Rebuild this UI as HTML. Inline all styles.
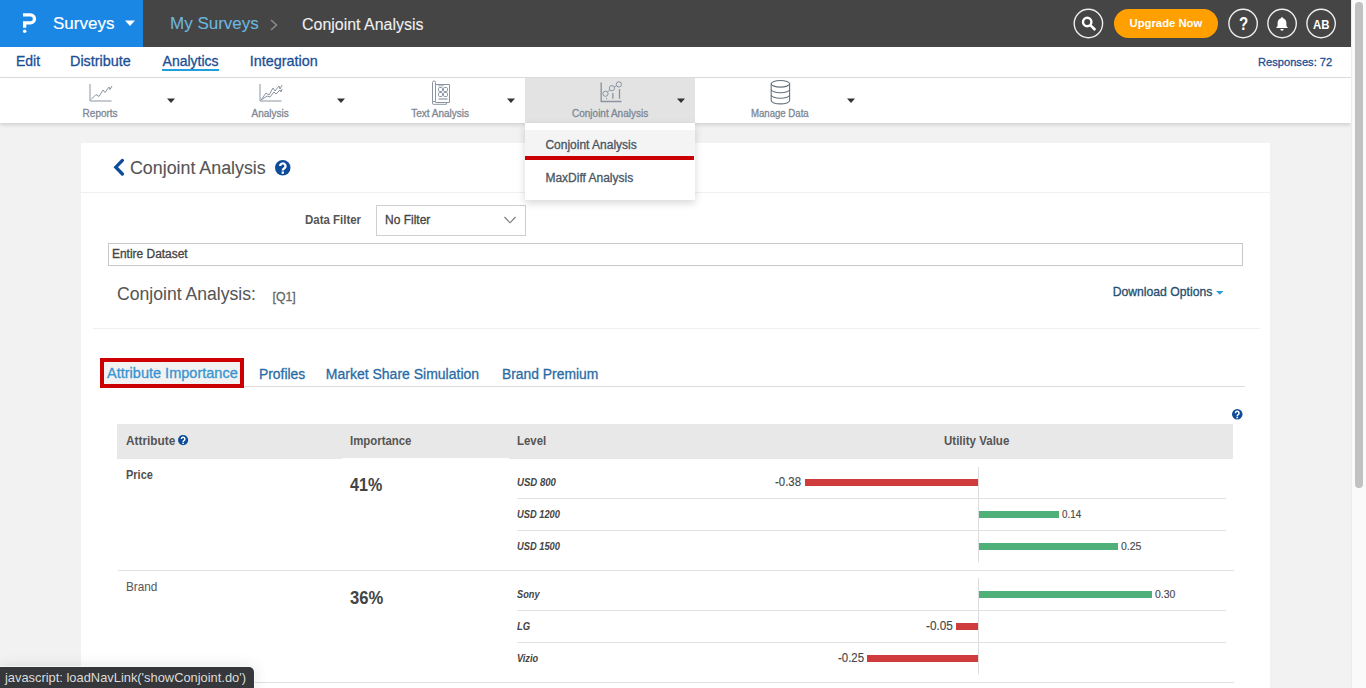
<!DOCTYPE html>
<html><head><meta charset="utf-8"><title>Conjoint Analysis</title>
<style>
*{box-sizing:border-box;margin:0;padding:0}
html,body{width:1366px;height:688px;overflow:hidden}
body{font-family:"Liberation Sans",sans-serif;background:#f2f2f2;position:relative}
.t{position:absolute;white-space:nowrap;line-height:1}
.r{position:absolute;display:block}
</style></head><body>
<div class="r" style="left:0px;top:0px;width:1351px;height:47px;background:#454545;"></div>
<div class="r" style="left:0px;top:0px;width:143px;height:47px;background:#1b87e5;"></div>
<svg class="r" style="left:0;top:0" width="143" height="47"><path d="M23,13.3 H30.5 A5.6,5.6 0 0 1 30.5,24.5 H26.3 V27.8 H23 V21.3 H30.5 A2.35,2.35 0 0 0 30.5,16.6 H23 Z" fill="#fff"/><circle cx="24.7" cy="31.3" r="1.75" fill="#fff"/><path d="M125,20.5 H135 L130,26 Z" fill="#fff"/></svg>
<div class="t" style="left:53px;top:15.01px;font-size:17px;color:#fff;font-weight:400;font-style:normal;-webkit-text-stroke:0.15px #fff;">Surveys</div>
<div class="t" style="left:170px;top:14.91px;font-size:17px;color:#6cb6de;font-weight:400;font-style:normal;-webkit-text-stroke:0.1px #6cb6de;">My Surveys</div>
<svg class="r" style="left:268px;top:16.8px" width="12" height="16"><path d="M3,3 L8.5,8 L3,13" stroke="#8a8a8a" stroke-width="1.6" fill="none"/></svg>
<div class="t" style="left:301.5px;top:15.69px;font-size:16.2px;color:#f0f0f0;font-weight:400;font-style:normal;transform:scaleX(0.985);transform-origin:0 0;-webkit-text-stroke:0.1px #f0f0f0;">Conjoint Analysis</div>
<svg class="r" style="left:1060px;top:0" width="291" height="47">
<circle cx="28.4" cy="23.5" r="14.2" stroke="#eee" stroke-width="1.4" fill="none"/>
<circle cx="27.2" cy="22" r="4.2" stroke="#fff" stroke-width="2.4" fill="none"/>
<path d="M30.3,25.1 L35.3,30" stroke="#fff" stroke-width="2.6"/>
<rect x="54" y="9" width="104" height="29" rx="14.5" fill="#ff9f00"/>
<circle cx="183.1" cy="23.5" r="14.2" stroke="#eee" stroke-width="1.4" fill="none"/>
<circle cx="222.1" cy="23.5" r="14.2" stroke="#eee" stroke-width="1.4" fill="none"/>
<circle cx="261.1" cy="23.5" r="14.2" stroke="#eee" stroke-width="1.4" fill="none"/>
<path d="M222,17.3 c-0.7,0 -1,0.5 -1,1 c-2.6,0.6 -3.4,2.8 -3.4,5 v2.6 l-1.6,2.2 h12 l-1.6,-2.2 v-2.6 c0,-2.2 -0.8,-4.4 -3.4,-5 c0,-0.5 -0.3,-1 -1,-1 z M220.3,29 a1.7,1.7 0 0 0 3.4,0 z" fill="#fff"/>
</svg>
<div class="t" style="left:1129.5px;top:18.03px;font-size:11.3px;color:#fff;font-weight:700;font-style:normal;">Upgrade Now</div>
<div class="t" style="left:1238.7px;top:15.16px;font-size:18px;color:#fff;font-weight:700;font-style:normal;transform:scaleX(0.84);transform-origin:0 0;">?</div>
<div class="t" style="left:1312.8px;top:17.70px;font-size:13px;color:#fff;font-weight:700;font-style:normal;transform:scaleX(0.88);transform-origin:0 0;">AB</div>
<div class="r" style="left:0px;top:47px;width:1351px;height:31px;background:#fff;"></div>
<div class="r" style="left:0px;top:77px;width:1351px;height:1px;background:#dedede;"></div>
<div class="t" style="left:16px;top:54.15px;font-size:14px;color:#1b4f96;font-weight:400;font-style:normal;-webkit-text-stroke:0.3px #1b4f96;">Edit</div>
<div class="t" style="left:70px;top:53.81px;font-size:14.4px;color:#1b4f96;font-weight:400;font-style:normal;-webkit-text-stroke:0.3px #1b4f96;">Distribute</div>
<div class="t" style="left:162.6px;top:54.15px;font-size:14px;color:#1b4f96;font-weight:400;font-style:normal;-webkit-text-stroke:0.3px #1b4f96;">Analytics</div>
<div class="r" style="left:162px;top:68.5px;width:57px;height:2px;background:#1e9fe0;"></div>
<div class="t" style="left:249.8px;top:53.81px;font-size:14.4px;color:#1b4f96;font-weight:400;font-style:normal;-webkit-text-stroke:0.3px #1b4f96;">Integration</div>
<div class="t" style="left:1258px;top:56.18px;font-size:11.6px;color:#1b4f96;font-weight:400;font-style:normal;transform:scaleX(0.96);transform-origin:0 0;-webkit-text-stroke:0.3px #1b4f96;">Responses: 72</div>
<div class="r" style="left:0px;top:78px;width:1351px;height:45px;background:#fff;box-shadow:0 2px 4px rgba(0,0,0,.14)"></div>
<div class="r" style="left:525px;top:78px;width:170px;height:45px;background:#e3e3e3;"></div>
<div class="t" style="left:82.6px;top:108.83px;font-size:10px;color:#7d8894;font-weight:400;font-style:normal;-webkit-text-stroke:0.3px #7d8894;">Reports</div>
<div class="t" style="left:251.5px;top:108.83px;font-size:10px;color:#7d8894;font-weight:400;font-style:normal;-webkit-text-stroke:0.3px #7d8894;">Analysis</div>
<div class="t" style="left:411.2px;top:108.83px;font-size:10px;color:#7d8894;font-weight:400;font-style:normal;-webkit-text-stroke:0.3px #7d8894;">Text Analysis</div>
<div class="t" style="left:572px;top:108.83px;font-size:10px;color:#7d8894;font-weight:400;font-style:normal;-webkit-text-stroke:0.3px #7d8894;">Conjoint Analysis</div>
<div class="t" style="left:751.2px;top:108.83px;font-size:10px;color:#7d8894;font-weight:400;font-style:normal;transform:scaleX(0.96);transform-origin:0 0;-webkit-text-stroke:0.3px #7d8894;">Manage Data</div>
<svg class="r" style="left:0;top:78px" width="900" height="45">
<g stroke="#8a95a1" fill="none" stroke-width="1">
<path d="M90,6 V23 H111.5"/><path d="M91,21.5 L96,16.5 L99,18.5 L103,12 L105,14.5 L109,9 L110,11.5 L112,8"/>
<path d="M260,6 V23 H281.5"/><path d="M261,22 L266,15 L269,17 L273,10 L275,13 L279,8 L280,11 L282,7"/><path d="M261,22 L267,18 L270,19 L274,14 L276,16 L280,12 L281,14 L282,11"/>
<path d="M432.5,4.5 a1.5,1.5 0 0 1 3,0 V23.5 h-3 z" />
<path d="M435.5,6.5 H449.5 V24.5 H435.5"/><path d="M432.5,23.5 V25.5 a0.8,0.8 0 0 0 0.8,0.8 H446.5 V24.5"/>
<rect x="438.5" y="9.5" width="4" height="4" rx="1.2"/><rect x="443.5" y="9.5" width="4" height="4" rx="1.2"/><rect x="438.5" y="14.5" width="4" height="4" rx="1.2"/><rect x="443.5" y="14.5" width="4" height="4" rx="1.2"/>
<path d="M438,7.8 H444" stroke-width="0.8"/><path d="M438.5,21 H447.5" stroke-width="1.2"/>
<path d="M601.2,4.5 V23.5 H621.5" stroke-width="1.4"/>
<circle cx="605.5" cy="15.7" r="2.6"/><circle cx="611.9" cy="10.2" r="2.6"/><circle cx="618.9" cy="6.4" r="2.6"/>
<path d="M607.6,14 L609.8,11.9 M614.2,9 L616.6,7.6"/>
<path d="M612.9,15 V20.8 M619.5,11 V20.8" stroke-width="1.3"/><path d="M606.5,19.8 V21"/>
</g>
<g stroke="#66717d" fill="none" stroke-width="1.1">
<ellipse cx="780.4" cy="5.8" rx="9.2" ry="3.3"/>
<path d="M771.2,5.8 V22.6 A9.2,3.3 0 0 0 789.6,22.6 V5.8"/>
<path d="M771.2,11.4 A9.2,3.3 0 0 0 789.6,11.4 M771.2,17 A9.2,3.3 0 0 0 789.6,17"/>
</g>
<g fill="#333">
<path d="M167,20.6 h8 l-4,4.3 z"/><path d="M337,20.6 h8 l-4,4.3 z"/><path d="M507,20.6 h8 l-4,4.3 z"/><path d="M677,20.6 h8 l-4,4.3 z"/><path d="M847,20.6 h8 l-4,4.3 z"/>
</g>
</svg>
<div class="r" style="left:81px;top:143px;width:1189px;height:560px;background:#fff;"></div>
<div class="r" style="left:81px;top:192px;width:1189px;height:1px;background:#eef0f2;"></div>
<svg class="r" style="left:110px;top:156px" width="20" height="22"><path d="M12.4,4.4 L5.8,11.2 L12.4,18" stroke="#0e4c9a" stroke-width="3.3" fill="none" stroke-linecap="round"/></svg>
<div class="t" style="left:130px;top:158.96px;font-size:18px;color:#555;font-weight:400;font-style:normal;transform:scaleX(0.99);transform-origin:0 0;-webkit-text-stroke:0.1px #555;">Conjoint Analysis</div>
<svg class="r" style="left:274.05px;top:158.95px" width="17.5" height="17.5"><circle cx="8.75" cy="8.75" r="7.75" fill="#0e4c9a"/><g transform="translate(1,1) scale(0.9688)"><path d="M5.3,6.3 A2.75,2.75 0 1 1 9.4,8.7 Q8,9.5 8,10.9" stroke="#fff" stroke-width="2.3" fill="none"/><rect x="6.8" y="11.9" width="2.4" height="2.3" fill="#fff"/></g></svg>
<div class="t" style="left:304.7px;top:213.84px;font-size:12px;color:#555;font-weight:700;font-style:normal;transform:scaleX(0.955);transform-origin:0 0;">Data Filter</div>
<div class="r" style="left:376px;top:204.5px;width:150px;height:31.5px;background:#fff;border:1px solid #cfcfcf"></div>
<div class="t" style="left:385px;top:214.14px;font-size:12px;color:#444;font-weight:400;font-style:normal;-webkit-text-stroke:0.3px #444;">No Filter</div>
<svg class="r" style="left:502px;top:214px" width="16" height="12"><path d="M2.5,3 L8,8.8 L13.5,3" stroke="#777" stroke-width="1.1" fill="none"/></svg>
<div class="r" style="left:108px;top:243px;width:1135px;height:23px;background:#fff;border:1px solid #c8c8c8"></div>
<div class="t" style="left:111.5px;top:248.04px;font-size:12px;color:#444;font-weight:400;font-style:normal;transform:scaleX(0.995);transform-origin:0 0;-webkit-text-stroke:0.3px #444;">Entire Dataset</div>
<div class="t" style="left:117px;top:286.40px;font-size:17.6px;color:#555;font-weight:400;font-style:normal;-webkit-text-stroke:0.05px #555;">Conjoint Analysis:</div>
<div class="t" style="left:272.5px;top:290.59px;font-size:12.3px;color:#666;font-weight:400;font-style:normal;-webkit-text-stroke:0.3px #666;">[Q1]</div>
<div class="t" style="left:1112.7px;top:285.67px;font-size:12.2px;color:#1f4e6e;font-weight:400;font-style:normal;-webkit-text-stroke:0.3px #1f4e6e;">Download Options</div>
<svg class="r" style="left:1214px;top:289px" width="12" height="8"><path d="M2,2 h7.5 l-3.75,3.8 z" fill="#2a9fd6"/></svg>
<div class="r" style="left:93px;top:328px;width:1167px;height:1px;background:#eef0f2;"></div>
<div class="r" style="left:244px;top:386px;width:1001px;height:1px;background:#dcdcdc;"></div>
<div class="r" style="left:100px;top:358px;width:144px;height:30px;background:#f2f2f2;border:4px solid #cc0000"></div>
<div class="t" style="left:106.5px;top:365.94px;font-size:14.6px;color:#3794d0;font-weight:400;font-style:normal;transform:scaleX(0.995);transform-origin:0 0;-webkit-text-stroke:0.3px #3794d0;">Attribute Importance</div>
<div class="t" style="left:258.8px;top:366.65px;font-size:14px;color:#2a6ba5;font-weight:400;font-style:normal;transform:scaleX(0.99);transform-origin:0 0;-webkit-text-stroke:0.3px #2a6ba5;">Profiles</div>
<div class="t" style="left:325.8px;top:366.65px;font-size:14px;color:#2a6ba5;font-weight:400;font-style:normal;transform:scaleX(1.0);transform-origin:0 0;-webkit-text-stroke:0.3px #2a6ba5;">Market Share Simulation</div>
<div class="t" style="left:501.9px;top:366.65px;font-size:14px;color:#2a6ba5;font-weight:400;font-style:normal;transform:scaleX(0.99);transform-origin:0 0;-webkit-text-stroke:0.3px #2a6ba5;">Brand Premium</div>
<svg class="r" style="left:1230.75px;top:408.25px" width="12.5" height="12.5"><circle cx="6.25" cy="6.25" r="5.25" fill="#0e4c9a"/><g transform="translate(1,1) scale(0.6562)"><path d="M5.3,6.3 A2.75,2.75 0 1 1 9.4,8.7 Q8,9.5 8,10.9" stroke="#fff" stroke-width="2.3" fill="none"/><rect x="6.8" y="11.9" width="2.4" height="2.3" fill="#fff"/></g></svg>
<div class="r" style="left:117px;top:424px;width:1116px;height:35px;background:#e8e8e8;"></div>
<div class="r" style="left:342px;top:458px;width:167px;height:1px;background:#fff;"></div>
<div class="t" style="left:125.6px;top:434.84px;font-size:12px;color:#555;font-weight:700;font-style:normal;transform:scaleX(0.985);transform-origin:0 0;">Attribute</div>
<svg class="r" style="left:176.9px;top:434.4px" width="12.2" height="12.2"><circle cx="6.1" cy="6.1" r="5.1" fill="#0e4c9a"/><g transform="translate(1,1) scale(0.6375)"><path d="M5.3,6.3 A2.75,2.75 0 1 1 9.4,8.7 Q8,9.5 8,10.9" stroke="#fff" stroke-width="2.3" fill="none"/><rect x="6.8" y="11.9" width="2.4" height="2.3" fill="#fff"/></g></svg>
<div class="t" style="left:349.6px;top:434.84px;font-size:12px;color:#555;font-weight:700;font-style:normal;transform:scaleX(0.95);transform-origin:0 0;">Importance</div>
<div class="t" style="left:516.6px;top:434.84px;font-size:12px;color:#555;font-weight:700;font-style:normal;transform:scaleX(0.95);transform-origin:0 0;">Level</div>
<div class="t" style="left:944px;top:434.84px;font-size:12px;color:#555;font-weight:700;font-style:normal;transform:scaleX(0.96);transform-origin:0 0;">Utility Value</div>
<div class="t" style="left:125.6px;top:469.47px;font-size:12.2px;color:#505050;font-weight:700;font-style:normal;transform:scaleX(0.9);transform-origin:0 0;">Price</div>
<div class="t" style="left:349.6px;top:476.79px;font-size:17.5px;color:#444;font-weight:700;font-style:normal;transform:scaleX(0.92);transform-origin:0 0;">41%</div>
<div class="t" style="left:126.3px;top:580.70px;font-size:12.4px;color:#5a5a5a;font-weight:400;font-style:normal;transform:scaleX(0.95);transform-origin:0 0;-webkit-text-stroke:0.05px #5a5a5a;">Brand</div>
<div class="t" style="left:349.6px;top:589.99px;font-size:17.5px;color:#444;font-weight:700;font-style:normal;transform:scaleX(0.95);transform-origin:0 0;">36%</div>
<div class="t" style="left:516.8px;top:477.54px;font-size:10px;color:#444;font-weight:700;font-style:italic;transform:scaleX(0.96);transform-origin:0 0;">USD 800</div>
<div class="t" style="left:516.8px;top:510.04px;font-size:10px;color:#444;font-weight:700;font-style:italic;transform:scaleX(0.93);transform-origin:0 0;">USD 1200</div>
<div class="t" style="left:516.8px;top:541.83px;font-size:10px;color:#444;font-weight:700;font-style:italic;transform:scaleX(0.93);transform-origin:0 0;">USD 1500</div>
<div class="t" style="left:516.8px;top:589.83px;font-size:10px;color:#444;font-weight:700;font-style:italic;transform:scaleX(0.92);transform-origin:0 0;">Sony</div>
<div class="t" style="left:516.8px;top:622.03px;font-size:10px;color:#444;font-weight:700;font-style:italic;transform:scaleX(0.95);transform-origin:0 0;">LG</div>
<div class="t" style="left:516.8px;top:654.03px;font-size:10px;color:#444;font-weight:700;font-style:italic;transform:scaleX(0.92);transform-origin:0 0;">Vizio</div>
<div class="r" style="left:517px;top:498px;width:709px;height:1px;background:#e2e2e2;"></div>
<div class="r" style="left:517px;top:530px;width:709px;height:1px;background:#e2e2e2;"></div>
<div class="r" style="left:517px;top:610px;width:709px;height:1px;background:#e2e2e2;"></div>
<div class="r" style="left:517px;top:642px;width:709px;height:1px;background:#e2e2e2;"></div>
<div class="r" style="left:118px;top:570px;width:1116px;height:1px;background:#e2e2e2;"></div>
<div class="r" style="left:118px;top:682px;width:1116px;height:1px;background:#e2e2e2;"></div>
<div class="r" style="left:978px;top:467px;width:1px;height:95px;background:#dcdcdc;"></div>
<div class="r" style="left:978px;top:578px;width:1px;height:96px;background:#dcdcdc;"></div>
<div class="r" style="left:805px;top:479px;width:173px;height:7px;background:#d03c3c;"></div>
<div class="r" style="left:979px;top:511px;width:80px;height:7px;background:#4fb07a;"></div>
<div class="r" style="left:979px;top:543px;width:139px;height:7px;background:#4fb07a;"></div>
<div class="r" style="left:979px;top:591px;width:173px;height:7px;background:#4fb07a;"></div>
<div class="r" style="left:956px;top:623px;width:22px;height:7px;background:#d03c3c;"></div>
<div class="r" style="left:867px;top:655px;width:111px;height:7px;background:#d03c3c;"></div>
<div class="t" style="left:774.6px;top:476.24px;font-size:12px;color:#484848;font-weight:400;font-style:normal;transform:scaleX(0.95);transform-origin:0 0;-webkit-text-stroke:0.15px #484848;">-0.38</div>
<div class="t" style="left:1062px;top:507.58px;font-size:11.6px;color:#484848;font-weight:400;font-style:normal;transform:scaleX(0.85);transform-origin:0 0;-webkit-text-stroke:0.15px #484848;">0.14</div>
<div class="t" style="left:1121px;top:539.58px;font-size:11.6px;color:#484848;font-weight:400;font-style:normal;transform:scaleX(0.9);transform-origin:0 0;-webkit-text-stroke:0.15px #484848;">0.25</div>
<div class="t" style="left:1154.6px;top:587.58px;font-size:11.6px;color:#484848;font-weight:400;font-style:normal;transform:scaleX(0.9);transform-origin:0 0;-webkit-text-stroke:0.15px #484848;">0.30</div>
<div class="t" style="left:925.5px;top:620.24px;font-size:12px;color:#484848;font-weight:400;font-style:normal;transform:scaleX(0.98);transform-origin:0 0;-webkit-text-stroke:0.15px #484848;">-0.05</div>
<div class="t" style="left:837.5px;top:652.24px;font-size:12px;color:#484848;font-weight:400;font-style:normal;transform:scaleX(0.95);transform-origin:0 0;-webkit-text-stroke:0.15px #484848;">-0.25</div>
<div class="r" style="left:525px;top:123px;width:170px;height:77px;background:#fff;box-shadow:0 3px 8px rgba(0,0,0,.16)"></div>
<div class="r" style="left:525px;top:129.5px;width:170px;height:27px;background:#f4f4f4;"></div>
<div class="r" style="left:525px;top:156px;width:169px;height:3.5px;background:#cc0000;"></div>
<div class="t" style="left:545.4px;top:139.04px;font-size:12px;color:#4a5561;font-weight:400;font-style:normal;transform:scaleX(1.0);transform-origin:0 0;-webkit-text-stroke:0.3px #4a5561;">Conjoint Analysis</div>
<div class="t" style="left:545.4px;top:171.84px;font-size:12px;color:#4a5561;font-weight:400;font-style:normal;transform:scaleX(1.0);transform-origin:0 0;-webkit-text-stroke:0.3px #4a5561;">MaxDiff Analysis</div>
<div class="r" style="left:0px;top:667px;width:254px;height:21px;background:#35373a;border-top-right-radius:5px;box-shadow:0 0 0 1px rgba(255,255,255,.6),0 0 14px 2px rgba(0,0,0,.09)"></div>
<div class="t" style="left:5px;top:671.40px;font-size:13px;color:#dcdcdc;font-weight:400;font-style:normal;transform:scaleX(0.99);transform-origin:0 0;">javascript: loadNavLink('showConjoint.do')</div>
<div class="r" style="left:1351px;top:0px;width:15px;height:688px;background:#fafafa;border-left:1px solid #ececec"></div>
<div class="r" style="left:1355px;top:2px;width:8px;height:486px;background:#c1c1c1;border-radius:4px"></div>
</body></html>
